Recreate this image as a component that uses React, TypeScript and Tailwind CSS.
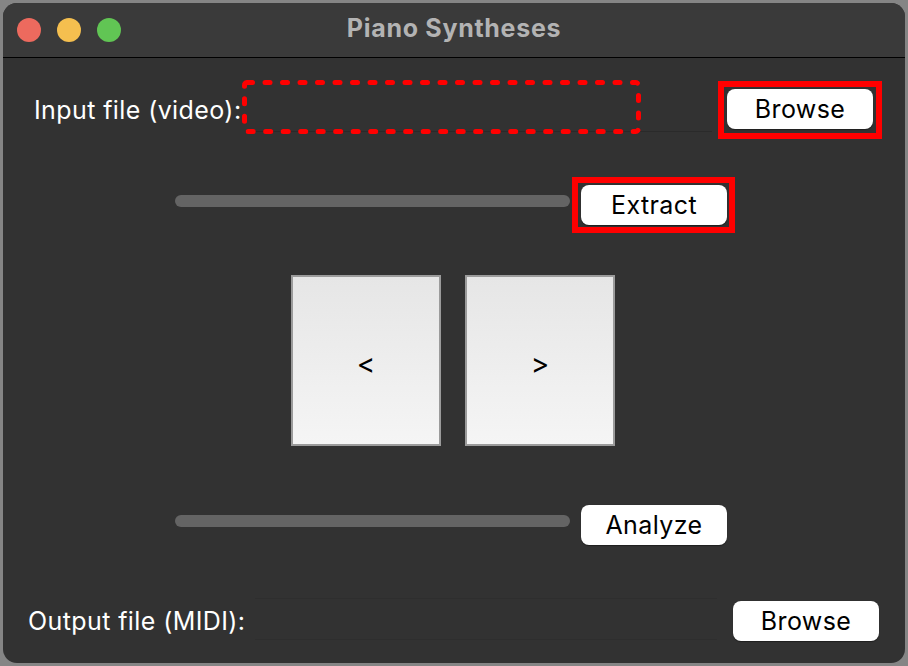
import React from "react";

const FONT = { fontFamily: "Inter, 'Noto Sans', 'Liberation Sans', sans-serif" };

function MacButton({ label }: { label: string }) {
  return (
    <div className="w-[146px] h-[40px] bg-white rounded-[8px] flex items-center justify-center text-[25px] tracking-[0.4px] leading-none text-black shadow-[0_0.5px_1px_rgba(0,0,0,0.4)]">
      {label}
    </div>
  );
}

function NavBox({ label }: { label: string }) {
  return (
    <div className="w-[150px] h-[171px] border-2 border-[#9b9b9b] bg-gradient-to-b from-[#e6e6e6] to-[#f5f5f5] flex items-center justify-center text-[28px] text-black leading-none pt-[6px]">
      {label}
    </div>
  );
}

function Bar() {
  return <div className="w-[395px] h-[12px] rounded-full bg-[#646464]" />;
}

export default function App() {
  return (
    <div className="w-[908px] h-[666px] bg-[#858585] p-[3px]" style={FONT}>
      <div className="w-full h-full rounded-[14px] overflow-hidden bg-[#323232] flex flex-col">
        {/* Title bar */}
        <div className="h-[55px] shrink-0 bg-[#3a3a3a] border-b border-black grid grid-cols-[1fr_auto_1fr] items-center">
          <div className="flex items-center gap-[16px] pl-[14px]">
            <div className="w-[24px] h-[24px] rounded-full bg-[#ed6a5e]" />
            <div className="w-[24px] h-[24px] rounded-full bg-[#f5bf4f]" />
            <div className="w-[24px] h-[24px] rounded-full bg-[#61c554]" />
          </div>
          <div className="text-[25px] tracking-[0.7px] font-bold text-[#b3b3b3] leading-none pb-[4px]">Piano Syntheses</div>
          <div />
        </div>

        {/* Input row */}
        <div className="mt-[23px] h-[58px] flex items-center">
          <div className="w-[208px] ml-[31px] text-[25px] tracking-[0.4px] text-white whitespace-nowrap leading-none">
            Input file (video):
          </div>
          <div className="relative w-[476px] h-[58px] flex items-center">
            <div className="ml-[3px] w-[467px] h-[44px] border-b border-[#2a2a2a]" />
            <svg className="absolute left-0 top-[-1px]" width="400" height="56" viewBox="0 0 400 56">
              <rect
                x="2.5"
                y="2.5"
                width="394"
                height="49"
                rx="3"
                fill="none"
                stroke="#ff0000"
                strokeWidth="5"
                strokeDasharray="5 12.5"
                strokeLinecap="round"
              />
            </svg>
          </div>
          <div className="w-[164px] h-[58px] border-[6px] border-[#ff0000] pl-[3px] pt-[2px]">
            <MacButton label="Browse" />
          </div>
        </div>

        {/* Extract row */}
        <div className="mt-[38px] h-[56px] flex items-start">
          <div className="ml-[172px] mt-[18px]">
            <Bar />
          </div>
          <div className="ml-[2px] w-[163px] h-[56px] border-[6px] border-[#ff0000] pl-[3px] pt-[2px]">
            <MacButton label="Extract" />
          </div>
        </div>

        {/* Nav buttons */}
        <div className="mt-[42px] flex justify-center gap-[24px] pr-[2px]">
          <NavBox label="<" />
          <NavBox label=">" />
        </div>

        {/* Analyze row */}
        <div className="mt-[59px] h-[40px] flex items-start">
          <div className="ml-[172px] mt-[10px]">
            <Bar />
          </div>
          <div className="ml-[11px]">
            <MacButton label="Analyze" />
          </div>
        </div>

        {/* Output row */}
        <div className="mt-[56px] h-[40px] flex items-center">
          <div className="w-[227px] ml-[25px] text-[25px] tracking-[0.4px] text-white whitespace-nowrap leading-none">
            Output file (MIDI):
          </div>
          <div className="w-[462px] h-[42px] mt-[-4px] border-y border-[#2e2e2e]" />
          <div className="ml-[16px]">
            <MacButton label="Browse" />
          </div>
        </div>
      </div>
    </div>
  );
}
